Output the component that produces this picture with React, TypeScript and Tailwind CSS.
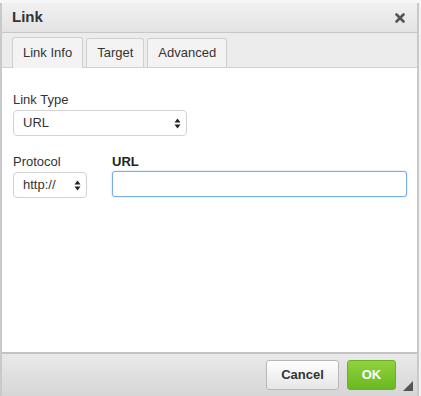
import { X } from "lucide-react";

const SelectArrows = () => (
  <svg width="7" height="11" viewBox="0 0 7 11" className="shrink-0">
    <path d="M3.5 0.5 L6.5 4.5 L0.5 4.5 Z" fill="#222" />
    <path d="M3.5 10.5 L6.5 6.5 L0.5 6.5 Z" fill="#222" />
  </svg>
);

const App = () => {
  return (
    <div
      className="w-[421px] h-[396px] bg-[#f2f2f2] flex flex-col overflow-hidden text-[#333]"
      style={{ fontFamily: '"Liberation Sans", Arial, sans-serif' }}
    >
      <div className="h-[3px] bg-[#f6f6f6] shrink-0" />
      <div className="flex-1 flex flex-col mr-[2px] border-l-2 border-r-2 border-[#c9c9c9] bg-white">
        {/* title */}
        <div className="h-[30px] flex items-center justify-between pl-[10px] pr-[10px] bg-gradient-to-b from-[#f1f1f1] to-[#e3e3e3] border-b border-[#c7c7c7] shrink-0">
          <span className="text-[15px] font-bold text-[#333]">Link</span>
          <X size={14} strokeWidth={4.5} className="text-[#555]" />
        </div>
        {/* tabs */}
        <div className="h-[35px] flex items-end gap-[3px] pl-[10px] bg-[#ececec] border-b border-[#d1d1d1] shrink-0">
          <div className="h-[31px] -mb-px px-[10px] flex items-center bg-[#f3f3f3] border border-b-0 border-[#cfcfcf] rounded-t-[3px] text-[13px]">
            Link Info
          </div>
          <div className="h-[29px] px-[10px] flex items-center bg-[#f3f3f3] border border-b-0 border-[#cfcfcf] rounded-t-[3px] text-[13px]">
            Target
          </div>
          <div className="h-[29px] px-[10px] flex items-center bg-[#f3f3f3] border border-b-0 border-[#cfcfcf] rounded-t-[3px] text-[13px]">
            Advanced
          </div>
        </div>
        {/* body */}
        <div className="flex-1 bg-white pl-[11px] pr-[10px] pt-[24px]">
          <div className="text-[13px] leading-[15px]">Link Type</div>
          <div className="mt-[3px] w-[174px] h-[26px] border border-[#d3d3d3] rounded-[4px] flex items-center justify-between pl-[9px] pr-[5px] text-[13px] bg-white">
            <span>URL</span>
            <SelectArrows />
          </div>
          <div className="mt-[18px] flex gap-[25px]">
            <div className="flex flex-col">
              <div className="text-[13px] leading-[15px]">Protocol</div>
              <div className="mt-[3px] w-[74px] h-[26px] border border-[#d3d3d3] rounded-[4px] flex items-center justify-between pl-[9px] pr-[5px] text-[13px] bg-white">
                <span>http://</span>
                <SelectArrows />
              </div>
            </div>
            <div className="flex-1 flex flex-col">
              <div className="text-[13px] leading-[15px] font-bold text-[#222]">URL</div>
              <div className="mt-[2px] h-[26px] border border-[#79aeea] rounded-[3px] bg-white shadow-[0_0_2px_#a9cdf4]" />
            </div>
          </div>
        </div>
        {/* footer */}
        <div className="h-[44px] shrink-0 border-t-2 border-[#c4c4c4] bg-gradient-to-b from-[#e9e9e9] to-[#d6d6d6] flex items-center justify-end pr-[21px] gap-[8px] relative">
          <button className="w-[73px] h-[30px] border border-[#b8b8b8] rounded-[3px] bg-gradient-to-b from-[#ffffff] to-[#e6e6e6] text-[13px] font-bold text-[#333]">
            Cancel
          </button>
          <button className="w-[49px] h-[30px] border border-[#6bae2a] rounded-[3px] bg-gradient-to-b from-[#8fd33e] to-[#6ab821] text-[13px] font-bold text-white">
            OK
          </button>
          <svg width="10" height="10" viewBox="0 0 10 10" className="absolute right-[4px] bottom-[5px]">
            <path d="M10 0 L10 10 L0 10 Z" fill="#555" />
          </svg>
        </div>
      </div>
    </div>
  );
};

export default App;
